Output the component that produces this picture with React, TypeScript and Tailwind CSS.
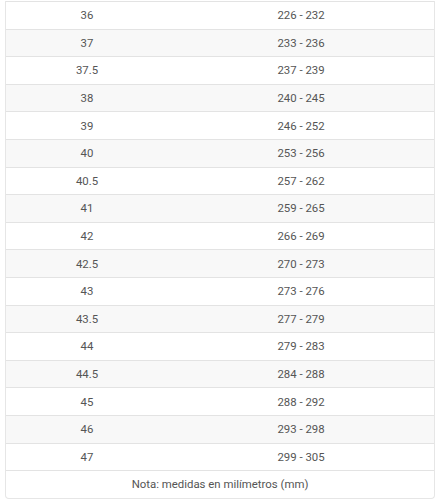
const rows: [string, string][] = [
  ['36', '226 - 232'],
  ['37', '233 - 236'],
  ['37.5', '237 - 239'],
  ['38', '240 - 245'],
  ['39', '246 - 252'],
  ['40', '253 - 256'],
  ['40.5', '257 - 262'],
  ['41', '259 - 265'],
  ['42', '266 - 269'],
  ['42.5', '270 - 273'],
  ['43', '273 - 276'],
  ['43.5', '277 - 279'],
  ['44', '279 - 283'],
  ['44.5', '284 - 288'],
  ['45', '288 - 292'],
  ['46', '293 - 298'],
  ['47', '299 - 305'],
]

export default function App() {
  return (
    <div className="bg-white w-[438px] h-[500px] pt-px pl-[5px]" style={{ fontFamily: 'Roboto, "Liberation Sans", sans-serif' }}>
      <div className="w-[430px] border-x border-b border-[#e6e6e6] rounded-b-[4px] text-[11.4px] text-[#555]">
        {rows.map((r, i) => (
          <div
            key={r[0]}
            className={`flex h-[27.6px] items-center pt-px border-t border-[#e3e3e3] ${i % 2 === 1 ? 'bg-[#f8f8f8]' : 'bg-white'}`}
          >
            <div className="w-[162px] text-center">{r[0]}</div>
            <div className="flex-1 text-center">{r[1]}</div>
          </div>
        ))}
        <div className="flex h-[27.6px] items-center justify-center pt-px border-t border-[#e3e3e3]">
          Nota: medidas en milímetros (mm)
        </div>
      </div>
    </div>
  )
}
